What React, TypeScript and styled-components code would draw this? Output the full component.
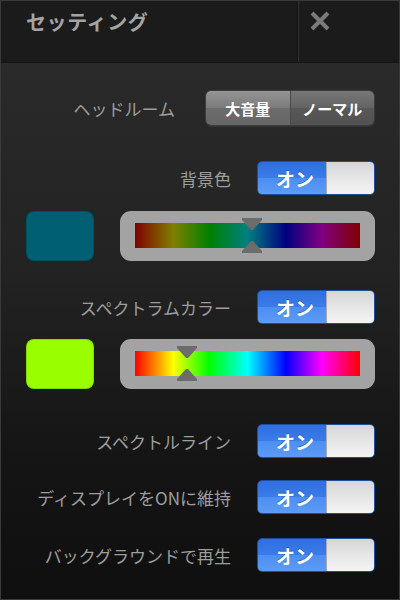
import React from "react";
import styled, { createGlobalStyle } from "styled-components";

const Global = createGlobalStyle`
  html, body { margin: 0; padding: 0; background: #111; }
  body { width: 400px; height: 600px; overflow: hidden; }
  * { box-sizing: border-box; }
`;

const FONT = `"Noto Sans CJK JP", "Noto Sans", sans-serif`;

const Page = styled.div`
  width: 400px;
  height: 600px;
  display: flex;
  flex-direction: column;
  font-family: ${FONT};
  border: 1px solid #3a3a3a;
  box-shadow: inset 1px 0 0 #2c2c2c, inset -1px 0 0 #2c2c2c;
  overflow: hidden;
`;

const Header = styled.div`
  height: 62px;
  flex: none;
  display: flex;
  background: #1b1b1b;
  border-bottom: 1px solid #141414;
`;

const Title = styled.div`
  flex: 1;
  padding: 6px 0 0 25px;
  font-size: 20px;
  font-weight: 700;
  color: #a4a4a4;
  letter-spacing: 0.6px;
  border-right: 1px solid #111;
`;

const CloseArea = styled.div`
  width: 101px;
  border-left: 1px solid #333;
  padding: 9px 0 0 10px;
`;

const Body = styled.div`
  flex: 1;
  display: flex;
  flex-direction: column;
  background: linear-gradient(#2a2a2a 0%, #222 40%, #141414 75%, #0f0f0f 100%);
  padding: 0 24px 0 24px;
`;

const Row = styled.div<{ $mt: number; $h: number; $gap?: number }>`
  margin-top: ${(p) => p.$mt}px;
  height: ${(p) => p.$h}px;
  display: flex;
  align-items: center;
  justify-content: flex-end;
  gap: ${(p) => p.$gap ?? 26}px;
`;

const Label = styled.div`
  font-size: 17px;
  color: #9d9d9d;
  text-align: right;
  white-space: nowrap;
`;

const Segmented = styled.div`
  width: 170px;
  height: 36px;
  display: flex;
  border-radius: 6px;
  overflow: hidden;
  border: 1px solid #3c3c3c;
  box-shadow: 0 1px 0 rgba(255, 255, 255, 0.06);
`;

const Segment = styled.div<{ $active?: boolean }>`
  flex: 1;
  display: flex;
  align-items: center;
  justify-content: center;
  color: #fff;
  font-weight: 700;
  font-size: 15px;
  background: ${(p) =>
    p.$active
      ? "linear-gradient(#959595, #7a7a7a 50%, #6c6c6c 51%, #666)"
      : "linear-gradient(#777, #636363 50%, #575757 51%, #525252)"};
  & + & {
    border-left: 1px solid #4a4a4a;
  }
`;

const Toggle = styled.div`
  width: 118px;
  height: 34px;
  display: flex;
  border-radius: 5px;
  overflow: hidden;
  border: 1px solid #1d4f9e;
  flex: none;
`;

const ToggleOn = styled.div`
  width: 68px;
  display: flex;
  align-items: center;
  justify-content: center;
  padding-left: 6px;
  color: #fff;
  font-weight: 700;
  font-size: 19px;
  background: linear-gradient(#2f6fe0, #3a7ce8 50%, #4c8ef2 51%, #5c9cf6);
  text-shadow: 0 -1px 0 rgba(0, 0, 0, 0.3);
`;

const ToggleKnob = styled.div`
  flex: 1;
  background: linear-gradient(#d6d6d6, #e6e6e6 50%, #f4f4f4);
  border-left: 1px solid #aaa;
`;

const ColorRow = styled.div<{ $mt: number }>`
  margin-top: ${(p) => p.$mt}px;
  height: 50px;
  display: flex;
  gap: 26px;
  padding-left: 1px;
`;

const Swatch = styled.div<{ $color: string }>`
  width: 68px;
  height: 50px;
  border-radius: 8px;
  background: ${(p) => p.$color};
  box-shadow: inset 0 0 0 1px rgba(0, 0, 0, 0.15);
`;

const SliderFrame = styled.div`
  flex: 1;
  height: 50px;
  border-radius: 11px;
  background: #a3a3a3;
  padding: 12px 15px 0 15px;
`;

const Bar = styled.div<{ $grad: string }>`
  position: relative;
  height: 25px;
  background: ${(p) => p.$grad};
`;

const ThumbTop = styled.svg`
  position: absolute;
  top: -5px;
  width: 20px;
  height: 12px;
  margin-left: -10px;
`;

const ThumbBottom = styled.svg`
  position: absolute;
  top: 18px;
  width: 20px;
  height: 12px;
  margin-left: -10px;
`;

const DIM = "linear-gradient(to right, #800000, #808000 17%, #008000 33%, #008080 50%, #000080 67%, #800080 83%, #800000)";
const FULL = "linear-gradient(to right, #ff0000, #ffff00 17%, #00ff00 33%, #00ffff 50%, #0000ff 67%, #ff00ff 83%, #ff0000)";

const Thumb: React.FC<{ pos: number }> = ({ pos }) => (
  <>
    <ThumbTop viewBox="0 0 20 12" style={{ left: `${pos * 100}%` }}>
      <polygon points="0,0 20,0 20,2 11,12 9,12 0,2" fill="#6c6c6c" />
    </ThumbTop>
    <ThumbBottom viewBox="0 0 20 12" style={{ left: `${pos * 100}%` }}>
      <polygon points="9,0 11,0 20,10 20,12 0,12 0,10" fill="#6c6c6c" />
    </ThumbBottom>
  </>
);

const ToggleRow: React.FC<{ label: string; mt: number }> = ({ label, mt }) => (
  <Row $mt={mt} $h={34}>
    <Label>{label}</Label>
    <Toggle>
      <ToggleOn>オン</ToggleOn>
      <ToggleKnob />
    </Toggle>
  </Row>
);

export default function App() {
  return (
    <Page>
      <Global />
      <Header>
        <Title>セッティング</Title>
        <CloseArea>
          <svg width="22" height="22" viewBox="0 0 22 22">
            <path d="M3 3 L19 19 M19 3 L3 19" stroke="#7a7a7a" strokeWidth="4" strokeLinecap="butt" />
          </svg>
        </CloseArea>
      </Header>
      <Body>
        <Row $mt={27} $h={36} $gap={30}>
          <Label>ヘッドルーム</Label>
          <Segmented>
            <Segment $active>大音量</Segment>
            <Segment>ノーマル</Segment>
          </Segmented>
        </Row>
        <ToggleRow label="背景色" mt={35} />
        <ColorRow $mt={16}>
          <Swatch $color="#005f72" />
          <SliderFrame>
            <Bar $grad={DIM}>
              <Thumb pos={0.518} />
            </Bar>
          </SliderFrame>
        </ColorRow>
        <ToggleRow label="スペクトラムカラー" mt={29} />
        <ColorRow $mt={15}>
          <Swatch $color="#99ff00" />
          <SliderFrame>
            <Bar $grad={FULL}>
              <Thumb pos={0.23} />
            </Bar>
          </SliderFrame>
        </ColorRow>
        <ToggleRow label="スペクトルライン" mt={35} />
        <ToggleRow label="ディスプレイをONに維持" mt={22} />
        <ToggleRow label="バックグラウンドで再生" mt={24} />
      </Body>
    </Page>
  );
}
